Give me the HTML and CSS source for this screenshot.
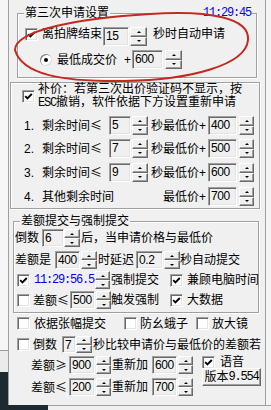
FILE: index.html
```html
<!DOCTYPE html>
<html lang="zh-CN">
<head>
<meta charset="utf-8">
<title>第三次申请设置</title>
<link rel="stylesheet" href="styles.css">
</head>
<body>
<div class="desk">
 <div class="top">
  <div class="side"><div class="sa"></div><div class="sb"></div><div class="sc"></div></div>
  <div class="dlg">
   <section class="grp g1">
    <div class="gt"><span class="ttl">第三次申请设置</span><span class="ttl clock mono">11:29:45</span></div>
    <div class="row g1r1">
     <span class="cb lift"><svg viewBox="0 0 9 9"><path d="M1.2 4.2 3.4 6.4 7.8 2"/></svg></span>
     <span class="t lift ml4">离拍牌结束</span>
     <span class="ed w26 ml1">15</span>
     <span class="spin w17 ml1"><i class="su"></i><i class="sd"></i></span>
     <span class="t lift ml6">秒时自动申请</span>
    </div>
    <div class="row g1r2">
     <span class="rb"></span>
     <span class="t ml5">最低成交价</span>
     <span class="plus ml7">+</span>
     <span class="ed w31 ml1">600</span>
     <span class="spin w17 ml2"><i class="su"></i><i class="sd"></i></span>
    </div>
   </section>

   <section class="grp g2">
    <div class="g2head">
     <span class="cb"><svg viewBox="0 0 9 9"><path d="M1.2 4.2 3.4 6.4 7.8 2"/></svg></span>
     <p class="note"><span class="ln">补价：若第三次出价验证码不显示，按</span><span class="ln"><span class="mono">ESC</span>撤销，软件依据下方设置重新申请</span></p>
    </div>
    <div class="row g2row ra">
     <span class="num">1.</span><span class="t c1">剩余时间<span class="sym">≤</span></span>
     <span class="ed w22">5</span><span class="spin w16 ml1"><i class="su"></i><i class="sd"></i></span>
     <span class="t c2">秒最低价+</span>
     <span class="ed w29">400</span><span class="spin w15 ml2"><i class="su"></i><i class="sd"></i></span>
    </div>
    <div class="row g2row rb2">
     <span class="num">2.</span><span class="t c1">剩余时间<span class="sym">≤</span></span>
     <span class="ed w22">7</span><span class="spin w16 ml1"><i class="su"></i><i class="sd"></i></span>
     <span class="t c2">秒最低价+</span>
     <span class="ed w29">500</span><span class="spin w15 ml2"><i class="su"></i><i class="sd"></i></span>
    </div>
    <div class="row g2row rc">
     <span class="num">3.</span><span class="t c1">剩余时间<span class="sym">≤</span></span>
     <span class="ed w22">9</span><span class="spin w16 ml1"><i class="su"></i><i class="sd"></i></span>
     <span class="t c2">秒最低价+</span>
     <span class="ed w29">600</span><span class="spin w15 ml2"><i class="su"></i><i class="sd"></i></span>
    </div>
    <div class="row g2row rc">
     <span class="num">4.</span><span class="t c1w">其他剩余时间</span>
     <span class="t c2">最低价+</span>
     <span class="ed w29">700</span><span class="spin w15 ml2"><i class="su"></i><i class="sd"></i></span>
    </div>
   </section>

   <section class="grp g3">
    <div class="gt"><span class="ttl">差额提交与强制提交</span></div>
    <div class="row g3row ga">
     <span class="t">倒数</span>
     <span class="ed w22 ml3">6</span><span class="spin w16"><i class="su"></i><i class="sd"></i></span>
     <span class="t ml1">后，当申请价格与最低价</span>
    </div>
    <div class="row g3row gb">
     <span class="t">差额是</span>
     <span class="ed w25 ml4">400</span><span class="spin w16 ml1"><i class="su"></i><i class="sd"></i></span>
     <span class="t ml1">时延迟</span>
     <span class="ed w27 ml2">0.2</span><span class="spin w16 ml1"><i class="su"></i><i class="sd"></i></span>
     <span class="t">秒自动提交</span>
    </div>
    <div class="row g3row gc">
     <span class="cb ml2"><svg viewBox="0 0 9 9"><path d="M1.2 4.2 3.4 6.4 7.8 2"/></svg></span>
     <span class="mono blue ml4">11:29:56.5</span>
     <span class="spin w15 ml1"><i class="su"></i><i class="sd"></i></span>
     <span class="t ml1">强制提交</span>
     <span class="cb ml11"><svg viewBox="0 0 9 9"><path d="M1.2 4.2 3.4 6.4 7.8 2"/></svg></span>
     <span class="t ml4">兼顾电脑时间</span>
    </div>
    <div class="row g3row gc">
     <span class="cb off ml2"></span>
     <span class="t ml3">差额<span class="sym">≤</span></span>
     <span class="ed w25 ml1">500</span><span class="spin w15 ml1"><i class="su"></i><i class="sd"></i></span>
     <span class="t">触发强制</span>
     <span class="cb ml11"><svg viewBox="0 0 9 9"><path d="M1.2 4.2 3.4 6.4 7.8 2"/></svg></span>
     <span class="t ml4">大数据</span>
    </div>
   </section>

   <div class="row orow oe">
    <span class="cb off"></span><span class="t ml4">依据张幅提交</span>
    <span class="cb off ml18"></span><span class="t ml3">防幺蛾子</span>
    <span class="cb off ml8"></span><span class="t ml3">放大镜</span>
   </div>
   <div class="row orow of">
    <span class="cb off"></span><span class="t ml3">倒数</span>
    <span class="ed w14 ml5">7</span><span class="spin w16"><i class="su"></i><i class="sd"></i></span>
    <span class="t ml1">秒比较申请价与最低价的差额若</span>
   </div>
   <div class="gh">
    <div class="ghl">
     <div class="row ghrow">
      <span class="t">差额<span class="sym">≥</span></span>
      <span class="ed w26 ml2">900</span><span class="spin w15 ml1"><i class="su"></i><i class="sd"></i></span>
      <span class="t ml1">重新加</span>
      <span class="ed w25 ml4">600</span><span class="spin w15 ml1"><i class="su"></i><i class="sd"></i></span>
     </div>
     <div class="row ghrow">
      <span class="t">差额<span class="sym">≤</span></span>
      <span class="ed w26 ml2">200</span><span class="spin w15 ml1"><i class="su"></i><i class="sd"></i></span>
      <span class="t ml1">重新加</span>
      <span class="ed w25 ml4">700</span><span class="spin w15 ml1"><i class="su"></i><i class="sd"></i></span>
     </div>
    </div>
    <div class="ghr">
     <div class="voice"><span class="cb"><svg viewBox="0 0 9 9"><path d="M1.2 4.2 3.4 6.4 7.8 2"/></svg></span><span class="t ml5">语音</span></div>
     <div class="btn">版本<span class="mono">9.554</span></div>
    </div>
   </div>

   <svg class="ring" viewBox="0 0 271 100" width="271" height="100"><path d="M15 50 C15 30 80 18 150 14 C210 10 250 18 248 40 C246 65 190 80 125 81 C60 82 22 74 15 50 Z"/></svg>
  </div>
  <div class="rside"></div>
 </div>
 <div class="bottom"><div class="dk"></div><div class="lt"></div></div>
</div>
</body>
</html>
```

FILE: styles.css
```css
*{box-sizing:border-box;margin:0;padding:0}
html,body{width:271px;height:410px;overflow:hidden}
body{background:#f0f0f0;color:#000;font:12px/12px "Liberation Sans","Noto Sans CJK SC",sans-serif}

.desk{display:flex;flex-direction:column;height:410px}
.top{display:flex;height:405px}
.side{width:8px;flex:none;display:flex;flex-direction:column}
.sa{height:350px;background:#f6f6f6}
.sb{height:22px;background:#ebebeb;border-top:1px solid #9c9c9c}
.sc{flex:1;background:#1d2b31}
.dlg{width:258px;flex:none;position:relative;display:flex;flex-direction:column;align-items:flex-start;border-left:1px solid #a0a0a0;border-right:1px solid #a0a0a0}
.rside{flex:1;background:#f4f4f4}
.bottom{display:flex;height:5px}
.dk{width:48px;background:#1d2b31}
.lt{flex:1;background:#f0f0f0;border-top:1px solid #a0a0a0}

/* group boxes */
.grp{display:flex;flex-direction:column;flex:none;border:1px solid #a0a0a0;box-shadow:1px 1px 0 #fff,inset 1px 1px 0 #fff}
.gt{display:flex;height:12px;margin-top:-7px;padding-left:6px}
.ttl{background:#f0f0f0;padding:0 1px;white-space:nowrap;line-height:12px}
.clock{margin-left:auto;margin-right:4px;color:#00f}

.g1{margin:13px 0 0 8px;width:240px;padding-bottom:8px}
.g1r1{margin-top:8px;height:19px;padding-left:7px}
.g1r2{margin-top:4px;height:19px;padding-left:22px}
.lift{margin-bottom:5px}

.g2{margin:4px 0 0 1px;width:250px;padding-bottom:2px}
.g2head{display:flex;align-items:flex-start;padding-left:11px}
.g2head .cb{margin-top:7px}
.note{margin-left:3px;display:flex;flex-direction:column;white-space:nowrap}
.ln{display:block;height:13px;line-height:13px}
.g2row{height:19px;padding-left:13px}
.g2row.ra{margin-top:7px}
.g2row.rb2{margin-top:4px}
.g2row.rc{margin-top:5px}
.num{width:18px;white-space:nowrap}
.c1{width:67px}
.c1w{width:106px}
.c2{width:60px;text-align:right;padding-right:2px}

.g3{margin:12px 0 0 4px;width:246px;padding-bottom:3px}
.g3row{height:18px;padding-left:1px}
.g3row.ga{margin-top:2px}
.g3row.gb{margin-top:4px}
.g3row.gc{margin-top:2px}

.orow{padding-left:8px}
.oe{margin-top:3px;height:15px}
.of{margin-top:5px;height:17px}
.gh{display:flex;margin:3px 0 0 22px}
.ghl{display:flex;flex-direction:column}
.ghrow{height:18px}
.ghrow + .ghrow{margin-top:4px}
.ghr{margin-left:9px;display:flex;flex-direction:column}
.voice{height:12px;display:flex;align-items:center}

/* rows and text */
.row{display:flex;align-items:center;flex:none}
.row > *{flex:none}
.t{white-space:nowrap;line-height:14px}
.sym{display:inline-block;width:12px;text-align:center;font-family:"Noto Sans CJK SC",sans-serif}
.plus{line-height:14px}
.mono{font-family:"Liberation Mono",monospace;font-size:12px;letter-spacing:-1.2px;white-space:nowrap}
.blue{color:#00f}

/* widgets */
.cb{width:13px;height:13px;flex:none;display:flex;align-items:center;justify-content:center;background:#fff;border:1px solid;border-color:#a0a0a0 #fff #fff #a0a0a0;box-shadow:inset 1px 1px 0 #696969,inset -1px -1px 0 #e3e3e3}
.cb svg{width:9px;height:9px;fill:none;stroke:#000;stroke-width:1.9}
.rb{width:12px;height:12px;border-radius:50%;background:#fff;box-shadow:inset 1px 1px 0 #808080,inset -1px -1px 0 #dcdcdc;display:flex;align-items:center;justify-content:center}
.rb::after{content:"";width:4px;height:4px;border-radius:50%;background:#000}

.ed{align-self:stretch;background:#f0f0f0;border:1px solid;border-color:#a0a0a0 #fff #fff #a0a0a0;box-shadow:inset 1px 1px 0 #696969,inset -1px -1px 0 #e3e3e3;padding:2px 0 0 2px;font-family:"Liberation Sans",sans-serif;font-size:12px;line-height:12px;letter-spacing:-.4px;white-space:nowrap;overflow:hidden}

.spin{align-self:stretch;display:flex;flex-direction:column}
.spin i{flex:1;display:flex;align-items:center;justify-content:center;background:#f0f0f0;border:1px solid;border-color:#fff #696969 #696969 #fff;box-shadow:inset -1px -1px 0 #a0a0a0}
.spin .su::after{content:"";border:2px solid transparent;border-top:0;border-bottom-color:#000}
.spin .sd::after{content:"";border:2px solid transparent;border-bottom:0;border-top-color:#000}

.btn{width:59px;height:18px;display:flex;align-items:center;justify-content:center;background:#f0f0f0;border:1px solid;border-color:#fff #696969 #696969 #fff;box-shadow:inset -1px -1px 0 #a0a0a0;white-space:nowrap}

.ring{position:absolute;left:-9px;top:0;pointer-events:none;fill:none;stroke:#c22a1e;stroke-width:2}

/* widths */
.w14{width:14px}.w15{width:15px}.w16{width:16px}.w17{width:17px}
.w22{width:22px}.w25{width:25px}.w26{width:26px}.w27{width:27px}.w29{width:29px}.w31{width:31px}

/* spacing */
.ml1{margin-left:1px}.ml2{margin-left:2px}.ml3{margin-left:3px}.ml4{margin-left:4px}
.ml5{margin-left:5px}.ml6{margin-left:6px}.ml7{margin-left:7px}.ml8{margin-left:8px}
.ml11{margin-left:11px}.ml18{margin-left:18px}
```
